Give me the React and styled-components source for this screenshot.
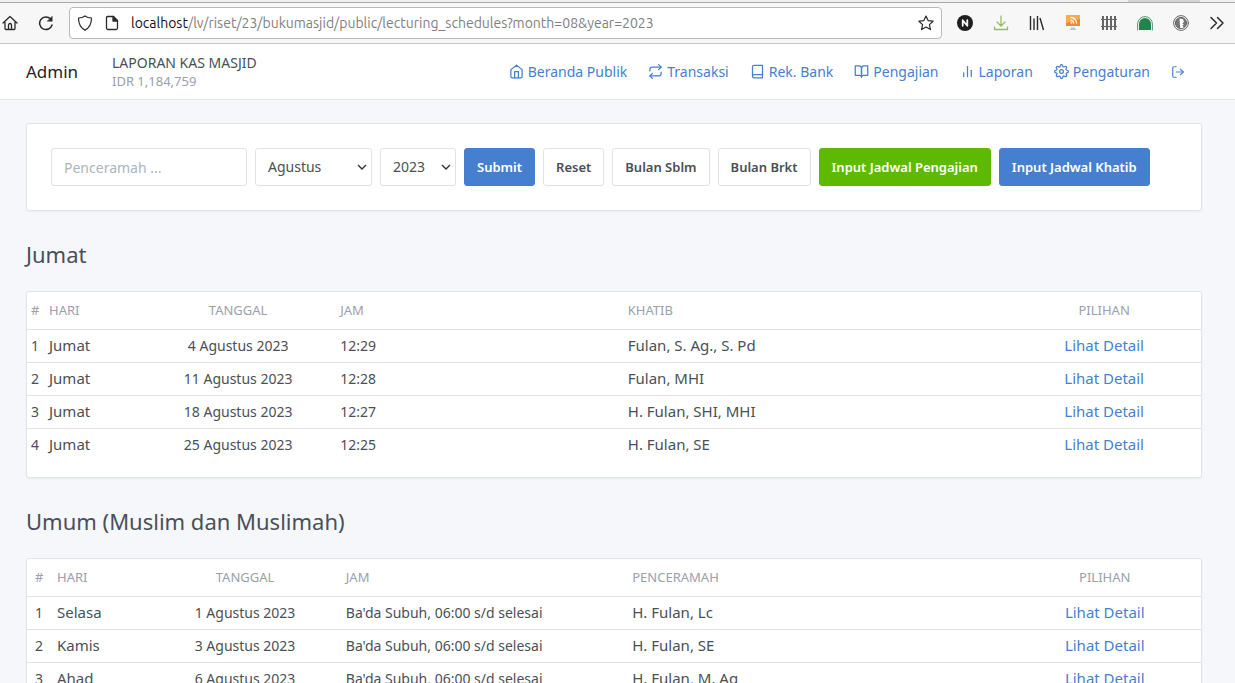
import React, { useState } from 'react';
import styled, { createGlobalStyle, css } from 'styled-components';
import { FiHome, FiRepeat, FiBook, FiBookOpen, FiBarChart2, FiSettings, FiLogOut } from 'react-icons/fi';

const GlobalStyle = createGlobalStyle`
  * {
    box-sizing: border-box;
  }

  body {
    margin: 0;
    background: #f5f7fb;
    color: #495057;
    font-family: 'Trebuchet MS', 'Noto Sans', sans-serif;
    font-size: 14px;
    line-height: 24px;
  }

  a {
    color: #467fcf;
    text-decoration: none;
  }

  h2 {
    margin: 0;
  }
`;

// Browser chrome
const TabStrip = styled.div`
  display: flex;
  justify-content: flex-end;
  height: 2px;
  padding-right: 35px;
  background: #f0f0f0;

  &::after {
    content: '';
    width: 72px;
    background: #d4d4d4;
  }
`;

const BrowserBar = styled.div`
  display: flex;
  align-items: center;
  height: 42px;
  background: #f7f7f7;
  border-top: 1px solid #a8a8a8;
  border-bottom: 1px solid #c4c4c4;
`;

const ToolButton = styled.button`
  display: flex;
  align-items: center;
  justify-content: center;
  flex: none;
  width: 36px;
  height: 32px;
  padding: 0;
  border: 0;
  background: none;
  color: #2b2b2b;

  &:first-child {
    width: 28px;
    padding-right: 8px;
  }
`;

const UrlBar = styled.div`
  display: flex;
  align-items: center;
  flex: 1;
  gap: 11px;
  height: 32px;
  margin: 0 5px;
  padding: 0 7px;
  background: #fff;
  border: 1px solid #b9b9b9;
  border-radius: 4px;
  color: #2b2b2b;
`;

const UrlText = styled.div`
  flex: 1;
  color: #808080;
  font-family: Ubuntu, 'Noto Sans', sans-serif;
  font-size: 14px;

  span {
    color: #111;
  }
`;

// App header
const Header = styled.header`
  display: flex;
  align-items: center;
  height: 56px;
  padding: 0 50px 0 26px;
  background: #fff;
  border-bottom: 1px solid #e3e6ea;
`;

const Brand = styled.a`
  width: 86px;
  color: #212529;
  font-size: 17px;
`;

const Balance = styled.div`
  display: flex;
  flex-direction: column;
  line-height: 18px;

  small {
    color: #9aa0ac;
    font-size: 13px;
  }
`;

const Nav = styled.nav`
  display: flex;
  align-items: center;
  gap: 21px;
  margin-left: auto;

  a {
    display: flex;
    align-items: center;
    gap: 4px;
  }
`;

// Page parts
const Page = styled.main`
  padding: 23px 33px 0 26px;
`;

const Card = styled.section`
  background: #fff;
  border: 1px solid #e0e5ec;
  border-radius: 3px;
  box-shadow: 0 1px 2px rgba(0, 0, 0, 0.05);
`;

const FilterForm = styled.form`
  display: flex;
  gap: 8px;
  padding: 24px;
`;

const field = css`
  height: 38px;
  padding: 0 12px;
  background: #fff;
  border: 1px solid #dee2e6;
  border-radius: 3px;
  color: #495057;
  font: inherit;
`;

const TextInput = styled.input`
  ${field}
  width: 196px;

  &::placeholder {
    color: #adb5bd;
  }
`;

const chevron = "%3Csvg xmlns='http://www.w3.org/2000/svg' width='10' height='6' fill='none' stroke='%23333' stroke-width='1.4'%3E%3Cpath d='m1 1 4 4 4-4'/%3E%3C/svg%3E";

const Select = styled.select`
  ${field}
  width: ${props => props.$width};
  appearance: none;
  background: #fff url("data:image/svg+xml,${chevron}") no-repeat right 4px center;
`;

const variants = {
  primary: css`
    background: #467fcf;
    border-color: #467fcf;
    color: #fff;
  `,
  success: css`
    background: #5eba00;
    border-color: #5eba00;
    color: #fff;
  `,
};

const Button = styled.button`
  height: 38px;
  padding: 0 12px;
  background: #fff;
  border: 1px solid #dee2e6;
  border-radius: 3px;
  color: #495057;
  font-family: inherit;
  font-size: 13px;
  font-weight: 600;
  white-space: nowrap;
  ${props => variants[props.$variant]}
`;

const Title = styled.h2`
  padding: 29px 0 23px;
  font-size: 22px;
  font-weight: 400;
  line-height: 28px;
`;

const TableCard = styled(Card)`
  padding-bottom: 16px;
`;

const Table = styled.table`
  width: 100%;
  border-collapse: collapse;
  table-layout: fixed;

  th,
  td {
    padding: 4px ${props => props.$pad};
    text-align: left;
    vertical-align: top;
    white-space: nowrap;
  }

  th {
    padding-top: 6px;
    padding-bottom: 7px;
    color: #9aa0ac;
    font-size: 13px;
    font-weight: 400;
  }

  td {
    border-top: 1px solid #dee2e6;
    font-size: 15px;
    line-height: 22px;
  }

  /* number, date and time */
  td:nth-child(1),
  td:nth-child(3),
  td:nth-child(4) {
    font-size: 14px;
    line-height: 24px;
  }

  th:nth-child(3),
  td:nth-child(3),
  th:nth-child(6),
  td:nth-child(6) {
    text-align: center;
  }
`;

const SUBUH = "Ba'da Subuh, 06:00 s/d selesai";

const jumat = [
  ['Jumat', '4 Agustus 2023', '12:29', 'Fulan, S. Ag., S. Pd'],
  ['Jumat', '11 Agustus 2023', '12:28', 'Fulan, MHI'],
  ['Jumat', '18 Agustus 2023', '12:27', 'H. Fulan, SHI, MHI'],
  ['Jumat', '25 Agustus 2023', '12:25', 'H. Fulan, SE'],
];

const umum = [
  ['Selasa', '1 Agustus 2023', SUBUH, 'H. Fulan, Lc'],
  ['Kamis', '3 Agustus 2023', SUBUH, 'H. Fulan, SE'],
  ['Ahad', '6 Agustus 2023', SUBUH, 'H. Fulan, M. Ag'],
];

const navItems = [
  { label: 'Beranda Publik', icon: FiHome },
  { label: 'Transaksi', icon: FiRepeat },
  { label: 'Rek. Bank', icon: FiBook },
  { label: 'Pengajian', icon: FiBookOpen },
  { label: 'Laporan', icon: FiBarChart2 },
  { label: 'Pengaturan', icon: FiSettings },
];

const Line = ({ children, size = 16, width = 1.3, ...rest }) => (
  <svg
    width={size}
    height={size}
    viewBox="0 0 16 16"
    fill="none"
    stroke="currentColor"
    strokeWidth={width}
    strokeLinecap="round"
    strokeLinejoin="round"
    aria-hidden="true"
    {...rest}
  >
    {children}
  </svg>
);

const Browser = () => (
  <>
    <TabStrip />
    <BrowserBar>
      <ToolButton aria-label="Home">
        <Line>
          <path d="M1 8 8 1.5 15 8M3 7v6.5a1 1 0 0 0 1 1h8a1 1 0 0 0 1-1V7M6.5 14v-4a1.5 1.5 0 0 1 3 0v4" />
        </Line>
      </ToolButton>
      <ToolButton aria-label="Reload">
        <Line width={1.5}>
          <path d="M14 10A6.3 6.3 0 1 1 12.6 4" />
          <path d="M14.2 1.5v4.7H9.5z" fill="currentColor" strokeWidth="0.5" />
        </Line>
      </ToolButton>
      <UrlBar>
        <Line width={1.2}>
          <path d="M8 .9c2 1.5 4 2 6.5 2.1 0 5.5-1.5 9.5-6.5 12.1C3 12.5 1.5 8.5 1.5 3 4 2.9 6 2.4 8 .9z" />
        </Line>
        <Line>
          <path d="M3.5 1.5h6l4 4V13a1.5 1.5 0 0 1-1.5 1.5H4A1.5 1.5 0 0 1 2.5 13V2.5a1 1 0 0 1 1-1" />
          <path d="M9 1.5V6h4.5z" fill="currentColor" />
        </Line>
        <UrlText>
          <span>localhost</span>/lv/riset/23/bukumasjid/public/lecturing_schedules?month=08&amp;year=2023
        </UrlText>
        <Line width={1.2}>
          <path d="m8 1 2.1 4.6 5 .6-3.7 3.4 1 5L8 12.1l-4.4 2.5 1-5L.9 6.200l5-.6z" />
        </Line>
      </UrlBar>
      <ToolButton aria-label="Notes">
        <Line width={1.8}>
          <circle cx="8" cy="8" r="8" fill="#1f1f1f" stroke="none" />
          <path d="M5.7 10.8V5.2l4.6 5.6V5.2" stroke="#fff" />
        </Line>
      </ToolButton>
      <ToolButton aria-label="Downloads">
        <Line stroke="#9bb86a">
          <path d="M8 1v9.5M4 7l4 4 4-4M1.5 12v2.5h13V12" />
        </Line>
      </ToolButton>
      <ToolButton aria-label="Library">
        <Line width={1.4} strokeLinecap="butt">
          <path d="M1.5 1v14M5 3.5V15M8.5 1v14M11 3l3.5 12" />
        </Line>
      </ToolButton>
      <ToolButton aria-label="Feeds">
        <Line stroke="none">
          <path d="M1 0h14v11H1z" fill="#f58a2c" />
          <path d="M1 0h14v4L1 8z" fill="#f9ab4f" />
          <path d="M6 2.5A5.5 5.5 0 0 1 11.5 8M6 5.3A2.7 2.7 0 0 1 8.7 8" stroke="#fff" />
          <circle cx="6.5" cy="7.7" r="1" fill="#fff" />
          <path d="M6 12.5h4v1l2 1.5H4l2-1.5z" fill="#b4cbd9" />
        </Line>
      </ToolButton>
      <ToolButton aria-label="Fence">
        <Line stroke="#666" width={2} strokeLinecap="butt">
          <path d="M2 1v14M6 1v14M10 1v14M14 1v14" />
          <path d="M0 4.5h16M0 11.5h16" strokeWidth="1.2" />
        </Line>
      </ToolButton>
      <ToolButton aria-label="Prayer times">
        <Line stroke="none">
          <path d="M.6 15V9a7.400 7.400 0 0 1 14.800 0v6" stroke="#4a9c6b" strokeWidth="1" />
          <path d="M2 15V9a6 6 0 0 1 12 0v6z" fill="#23834b" />
        </Line>
      </ToolButton>
      <ToolButton aria-label="Privacy">
        <Line stroke="#666" width={1}>
          <circle cx="8" cy="8" r="7.4" />
          <circle cx="8" cy="8" r="5.6" fill="#777" />
          <path d="M6.5 4c2.5-.8 4.500.5 4.300 3L9.300 8.500l1.700 1-1.500.8 1 2.500c-1.500.7-2.700.4-3.300 0z" fill="#fff" stroke="none" />
        </Line>
      </ToolButton>
      <ToolButton aria-label="More tools">
        <Line width={1.5}>
          <path d="m2 2.5 5.5 5.5L2 13.5M8.5 2.5 14 8l-5.5 5.5" />
        </Line>
      </ToolButton>
    </BrowserBar>
  </>
);

const Schedule = ({ title, speaker, rows, pad, widths }) => (
  <>
    <Title>{title}</Title>
    <TableCard>
      <Table $pad={pad}>
        <colgroup>
          {widths.map((width, index) => (
            <col key={index} style={{ width }} />
          ))}
        </colgroup>
        <thead>
          <tr>
            <th>#</th>
            <th>HARI</th>
            <th>TANGGAL</th>
            <th>JAM</th>
            <th>{speaker}</th>
            <th>PILIHAN</th>
          </tr>
        </thead>
        <tbody>
          {rows.map((row, index) => (
            <tr key={row[1]}>
              <td>{index + 1}</td>
              {row.map((cell, i) => (
                <td key={i}>{cell}</td>
              ))}
              <td><a href="#detail">Lihat Detail</a></td>
            </tr>
          ))}
        </tbody>
      </Table>
    </TableCard>
  </>
);

const App = () => {
  const [month, setMonth] = useState('Agustus');
  const [year, setYear] = useState('2023');

  return (
    <>
      <GlobalStyle />
      <Browser />
      <Header>
        <Brand href="#home">Admin</Brand>
        <Balance>
          LAPORAN KAS MASJID
          <small>IDR 1,184,759</small>
        </Balance>
        <Nav>
          {navItems.map(({ label, icon: Icon }) => (
            <a key={label} href="#nav">
              <Icon size={15} />
              {label}
            </a>
          ))}
          <a href="#logout" aria-label="Keluar"><FiLogOut size={14} /></a>
        </Nav>
      </Header>
      <Page>
        <Card>
          <FilterForm onSubmit={e => e.preventDefault()}>
            <TextInput type="text" placeholder="Penceramah ..." aria-label="Penceramah" />
            <Select $width="117px" aria-label="Bulan" value={month} onChange={e => setMonth(e.target.value)}>
              <option>Juli</option>
              <option>Agustus</option>
              <option>September</option>
            </Select>
            <Select $width="76px" aria-label="Tahun" value={year} onChange={e => setYear(e.target.value)}>
              <option>2022</option>
              <option>2023</option>
            </Select>
            <Button type="submit" $variant="primary">Submit</Button>
            <Button type="button">Reset</Button>
            <Button type="button">Bulan Sblm</Button>
            <Button type="button">Bulan Brkt</Button>
            <Button type="button" $variant="success">Input Jadwal Pengajian</Button>
            <Button type="button" $variant="primary">Input Jadwal Khatib</Button>
          </FilterForm>
        </Card>
        <Schedule
          title="Jumat"
          speaker="KHATIB"
          rows={jumat}
          pad="4px"
          widths={['18px', '8.1%', '16.7%', '24.5%', 'auto', '16.5%']}
        />
        <Schedule
          title="Umum (Muslim dan Muslimah)"
          speaker="PENCERAMAH"
          rows={umum}
          pad="8px"
          widths={['22px', '8.8%', '15.8%', '24.4%', 'auto', '16.4%']}
        />
      </Page>
    </>
  );
};

export default App;
